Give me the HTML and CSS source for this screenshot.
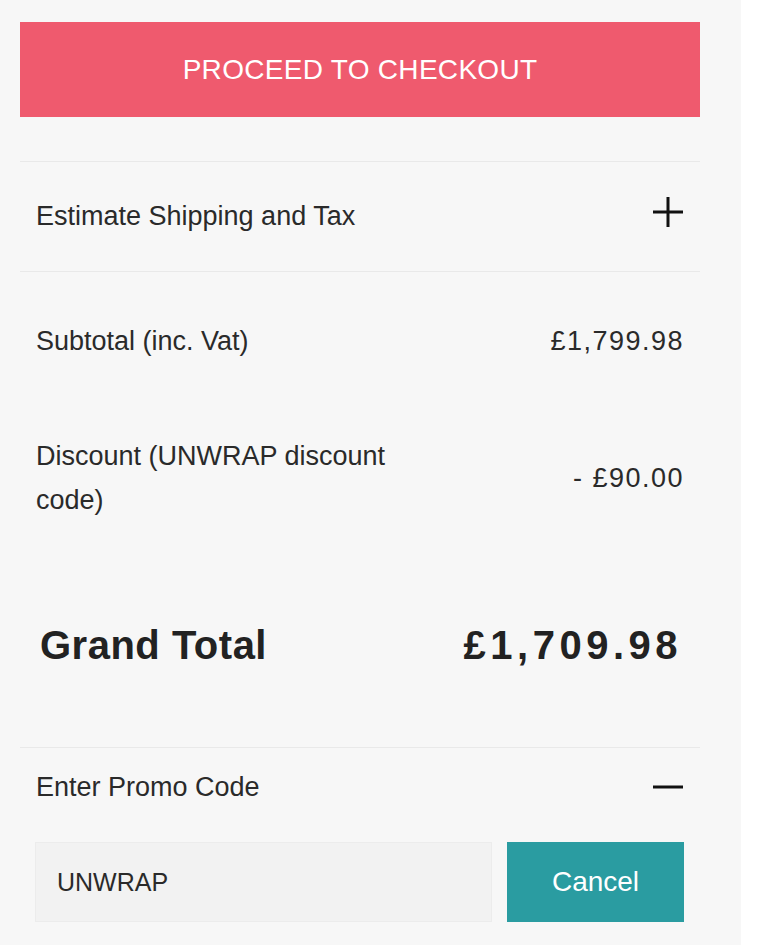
FILE: index.html
```html
<!DOCTYPE html>
<html lang="en">
<head>
    <meta charset="UTF-8">
    <title>Basket summary</title>
    <link rel="stylesheet" href="styles.css">
</head>
<body>
    <div class="summary">
        <button class="checkout-btn">PROCEED TO CHECKOUT</button>

        <div class="toggle-row estimate">
            <span>Estimate Shipping and Tax</span>
            <svg class="toggle-icon plus" width="32" height="32" viewBox="0 0 32 32">
                <path d="M16 1v30M1 16h30" stroke="#111" stroke-width="3" fill="none"/>
            </svg>
        </div>

        <ul class="totals">
            <li class="totals-row subtotal">
                <span class="label">Subtotal (inc. Vat)</span>
                <span class="value">£1,799.98</span>
            </li>
            <li class="totals-row discount">
                <span class="label">Discount (UNWRAP discount code)</span>
                <span class="value">- £90.00</span>
            </li>
            <li class="totals-row grand">
                <span class="label">Grand Total</span>
                <span class="value">£1,709.98</span>
            </li>
        </ul>

        <div class="promo">
            <div class="toggle-row promo-head">
                <span>Enter Promo Code</span>
                <svg class="toggle-icon" width="32" height="32" viewBox="0 0 32 32">
                    <path d="M1 16h30" stroke="#111" stroke-width="3" fill="none"/>
                </svg>
            </div>
            <form class="promo-form" onsubmit="return false">
                <input class="promo-input" type="text" value="UNWRAP">
                <button class="promo-btn">Cancel</button>
            </form>
        </div>
    </div>
</body>
</html>
```

FILE: styles.css
```css
body{
    margin: 0;
    background: #fff;
    font-family: "Liberation Sans", Arial, sans-serif;
    color: #2a2a2a;
}
ul, li{
    list-style: none;
    padding: 0;
    margin: 0;
}
.summary{
    width: 741px;
    min-height: 945px;
    box-sizing: border-box;
    padding: 22px 41px 0 20px;
    background: #f7f7f7;
}
.checkout-btn{
    display: block;
    width: 100%;
    height: 95px;
    border: 0;
    background: #ef5a6e;
    color: #fff;
    font-family: inherit;
    font-size: 28px;
    letter-spacing: 0.3px;
    cursor: pointer;
}
.toggle-row{
    display: flex;
    align-items: center;
    justify-content: space-between;
    padding: 0 16px;
    font-size: 27px;
}
.estimate{
    margin-top: 44px;
    height: 109px;
    border-top: 1px solid #e9e9e9;
    border-bottom: 1px solid #e9e9e9;
}
.estimate .plus{
    margin-top: -10px;
}
.totals{
    padding: 47px 16px 77px;
    border-bottom: 1px solid #e9e9e9;
}
.totals-row{
    display: flex;
    align-items: center;
    justify-content: space-between;
    font-size: 27px;
    line-height: 44px;
}
.totals-row .value{
    letter-spacing: 1.5px;
}
.discount{
    margin-top: 71px;
}
.discount .label{
    width: 370px;
}
.grand{
    margin-top: 98px;
    font-size: 40px;
    line-height: 50px;
    font-weight: bold;
    color: #222;
}
.grand .label{
    padding-left: 4px;
    letter-spacing: 0.5px;
}
.grand .value{
    letter-spacing: 4.5px;
    margin-right: 2px;
}
.promo-head{
    height: 44px;
    margin-top: 17px;
}
.promo-form{
    display: flex;
    gap: 15px;
    margin: 33px 16px 0 15px;
}
.promo-input{
    flex: 1;
    height: 80px;
    box-sizing: border-box;
    border: 1px solid #ececec;
    background: #f2f2f2;
    padding: 0 21px;
    font-family: inherit;
    font-size: 25px;
    color: #2a2a2a;
    outline: none;
}
.promo-btn{
    width: 177px;
    height: 80px;
    border: 0;
    background: #2a9ca1;
    color: #fff;
    font-family: inherit;
    font-size: 28px;
    cursor: pointer;
}
```
